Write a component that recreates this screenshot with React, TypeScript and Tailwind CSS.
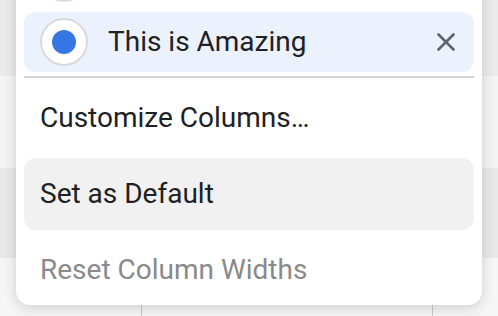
import React from 'react';

const App = () => {
  return (
    <div className="relative w-[498px] h-[316px] overflow-hidden bg-[#f5f5f5] font-['Roboto',sans-serif]">
      {/* Table behind the menu */}
      <div className="flex flex-col">
        <div className="h-[76px] bg-[#ebebeb]" />
        <div className="h-[92px] bg-[#f4f4f4]" />
        <div className="h-[90px] bg-[#e9e9ea]" />
        <div className="h-[58px] bg-[#f6f6f6] grid grid-cols-[141px_292px_1fr]">
          <div />
          <div className="border-l border-r border-[#c9c9c9]" />
          <div />
        </div>
      </div>

      {/* Popover menu */}
      <div className="absolute left-4 top-[-56px] w-[466px] rounded-[14px] bg-white shadow-[0_3px_14px_rgba(0,0,0,0.16)] px-2 pt-1 flex flex-col">
        {/* Previous option (scrolled out of view) */}
        <div className="h-[60px] flex items-center pl-4">
          <div className="w-12 h-12 rounded-full border-2 border-[#dadada] bg-white" />
        </div>

        {/* Selected option */}
        <div className="mt-1 h-[60px] flex items-center pl-4 rounded-xl bg-[#ebf1fd]">
          <div className="w-12 h-12 rounded-full border-2 border-[#dadada] bg-white flex items-center justify-center">
            <div className="w-6 h-6 rounded-full bg-[#3578e5]" />
          </div>
          <span className="ml-5 flex-1 text-[28px] text-[#202124]">This is Amazing</span>
          <svg className="mr-[19px]" width="18" height="18" viewBox="0 0 18 18" fill="none">
            <path d="M1.5 1.5L16.5 16.5M16.5 1.5L1.5 16.5" stroke="#5f6368" strokeWidth="2.6" strokeLinecap="round" />
          </svg>
        </div>

        <div className="mt-1 h-[2px] bg-[#d1d5db]" />

        <div className="mt-1 flex flex-col gap-1">
          <div className="h-[72px] flex items-center pl-4 rounded-xl text-[28px] text-[#202124]">
            Customize Columns…
          </div>
          <div className="h-[72px] flex items-center pl-4 rounded-xl bg-[#f1f1f1] text-[28px] text-[#202124]">
            Set as Default
          </div>
          <div className="h-[71px] flex items-center pl-4 rounded-xl text-[28px] text-[#8a8a8a]">
            Reset Column Widths
          </div>
        </div>
      </div>
    </div>
  );
};

export default App;
